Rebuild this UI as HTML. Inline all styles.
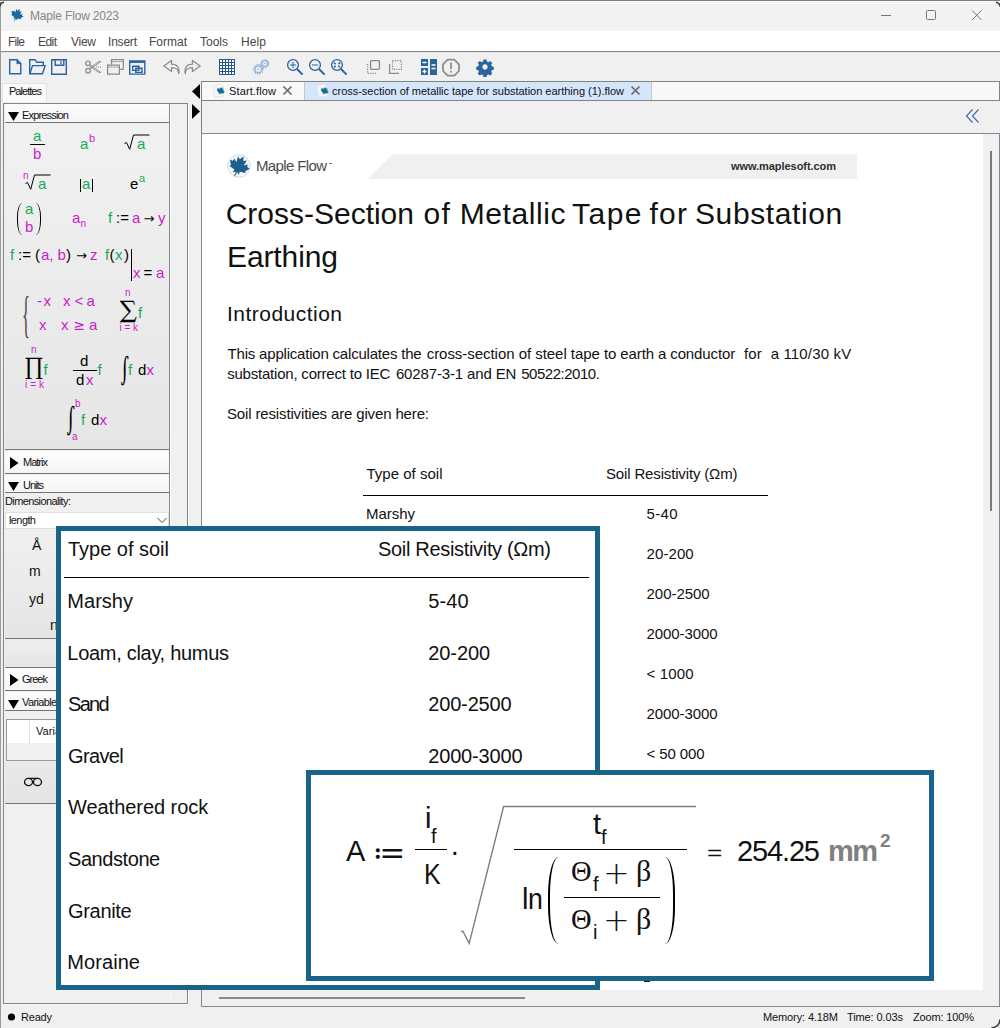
<!DOCTYPE html>
<html lang="en"><head><meta charset="utf-8"><title>Maple Flow 2023</title>
<style>
html,body{margin:0;padding:0}
body{width:1000px;height:1028px;overflow:hidden;background:#f0f0f0;position:relative;font-family:"Liberation Sans",sans-serif}
.b{position:absolute;box-sizing:border-box;display:block}
.t{position:absolute;white-space:pre;line-height:1;margin:0;padding:0}
.L{position:absolute;left:0;top:0;width:1000px;height:1028px;overflow:hidden}
svg{overflow:visible}
svg text{white-space:pre}
</style></head>
<body>
<div class="L" id="app">
<div class="b " style="left:0px;top:0px;width:1000px;height:1px;background:#7d7d7d;"></div>
<div class="b " style="left:0px;top:1px;width:1000px;height:1px;background:#fafafa;"></div>
<div class="b " style="left:0px;top:2px;width:1000px;height:29px;background:#f3f3f3;"></div>
<div class="b " style="left:0px;top:31px;width:1000px;height:20px;background:#ffffff;"></div>
<div class="b " style="left:0px;top:51px;width:1000px;height:1px;background:#8c8c8c;"></div>
<div class="b " style="left:0px;top:52px;width:1000px;height:1px;background:#e2e2e2;"></div>
<div class="b " style="left:0px;top:2px;width:1px;height:1026px;background:#9c9c9c;"></div>
<svg class="b" style="left:10px;top:8px;" width="14" height="14" viewBox="0 0 24 24"><g transform="rotate(24 12 12)"><path d="M12 0.5 L14 5 L17.2 3.2 L16.2 9.2 L19.6 6.6 L20.3 9.3 L23.5 9.8 L20.2 14.2 L21.3 15.8 L15 17 L15.6 20.2 L12.6 18.6 L12.5 23.5 L11.5 23.5 L11.4 18.6 L8.4 20.2 L9 17 L2.7 15.8 L3.8 14.2 L0.5 9.8 L3.7 9.3 L4.4 6.6 L7.8 9.2 L6.8 3.2 L10 5 Z" fill="#1a6a9c"/></g></svg>
<svg class="b" style="left:870px;top:5px;" width="120" height="20" viewBox="0 0 120 20"><g stroke="#777" stroke-width="1" fill="none"><path d="M11 10.5h10"/><rect x="56.5" y="5.5" width="9" height="9" rx="1"/><path d="M102 5.5l9.5 9.5M111.5 5.5l-9.5 9.5"/></g></svg>
<svg class="b" style="left:0px;top:0px;" width="1000" height="82" viewBox="0 0 1000 82">
<g fill="none" stroke="#2b62a0" stroke-width="1.4" stroke-linejoin="miter">
 <path d="M9.7 59.7h7.3l3.8 3.8v10.3h-11.1z"/><path d="M16.8 59.7v4h4z" fill="#2b62a0" stroke-width="0.6"/>
 <path d="M29.7 73.8v-14.1h5.3l1.8 2.6h6.5v3.2"/><path d="M29.9 73.8l2.6-8.2h12.6l-2.6 8.2z"/>
 <path d="M51.7 59.7h14.6v14.6h-14.6z"/><path d="M55.2 59.7v5.6h8.6v-5.6"/><path d="M61 61v3.2" stroke-width="1.2"/>
 <path d="M129.7 60.9h15.1v13.2h-15.1z"/><path d="M129.7 62h15.1" stroke-width="1.9"/>
 <path d="M132.7 66.2h6.2v4.2h-6.2z"/><path d="M135.8 68.2h6.2v4.2h-6.2z"/>
</g>
<g fill="none" stroke="#8a8a8a" stroke-width="1.2">
 <circle cx="88" cy="63.3" r="2.3"/><circle cx="88" cy="70.7" r="2.3"/>
 <path d="M89.8 64.6L101 72.6l-2.6-.4L89.6 66M89.8 69.4L101 61.4l-2.6.4L89.6 68" stroke-width=".9"/><path d="M96 67h5" stroke-dasharray="1 1"/>
 <path d="M111.5 64.5v-4.8h11.8v9.6h-3.2"/><path d="M111.5 61.6h11.8" stroke-width="1" stroke-dasharray="2.2 .8"/>
 <path d="M107.6 65.2h11.8v9h-11.8z"/><path d="M107.6 67.1h11.8" stroke-width="1" stroke-dasharray="2.2 .8"/>
 <path d="M178.8 73.6c-0.2-4.2-2.8-6-7.2-6v4l-7.8-5.6 7.8-5.6v3.8c5.6 0 8.2 3.6 7.2 9.4z" stroke-linejoin="round"/>
 <path d="M185.2 73.6c0.2-4.2 2.8-6 7.2-6v4l7.8-5.6-7.8-5.6v3.8c-5.6 0-8.2 3.6-7.2 9.4z" stroke-linejoin="round"/>
</g>
<rect x="219" y="59" width="16" height="16" fill="#1c5a8e"/>
<g fill="#fff"><rect x="220" y="60" width="2" height="2"/><rect x="220" y="63" width="2" height="2"/><rect x="220" y="66" width="2" height="2"/><rect x="220" y="69" width="2" height="2"/><rect x="220" y="72" width="2" height="2"/><rect x="223" y="60" width="2" height="2"/><rect x="223" y="63" width="2" height="2"/><rect x="223" y="66" width="2" height="2"/><rect x="223" y="69" width="2" height="2"/><rect x="223" y="72" width="2" height="2"/><rect x="226" y="60" width="2" height="2"/><rect x="226" y="63" width="2" height="2"/><rect x="226" y="66" width="2" height="2"/><rect x="226" y="69" width="2" height="2"/><rect x="226" y="72" width="2" height="2"/><rect x="229" y="60" width="2" height="2"/><rect x="229" y="63" width="2" height="2"/><rect x="229" y="66" width="2" height="2"/><rect x="229" y="69" width="2" height="2"/><rect x="229" y="72" width="2" height="2"/><rect x="232" y="60" width="2" height="2"/><rect x="232" y="63" width="2" height="2"/><rect x="232" y="66" width="2" height="2"/><rect x="232" y="69" width="2" height="2"/><rect x="232" y="72" width="2" height="2"/></g>
<g fill="none" stroke="#6c9bd2" stroke-width="1.1">
 <circle cx="258.3" cy="69.3" r="3.4" stroke-width=".9"/><circle cx="258.3" cy="69.3" r="4.6" stroke-dasharray="1.1 1.3" stroke-width="1.3"/>
 <circle cx="264.8" cy="63.6" r="2.8" stroke-width=".9"/><circle cx="264.8" cy="63.6" r="3.9" stroke-dasharray="1 1.2" stroke-width="1.2"/>
 <path d="M257.5 69.3h1.6M264.2 63.6h1.3" stroke-width=".9"/>
</g>
<g fill="none" stroke="#2b62a0" stroke-width="1.3">
 <circle cx="293" cy="65" r="5.4"/><path d="M290 65h6M293 62v6" stroke-width="1"/><path d="M297 69l5.6 5.6" stroke-width="2"/>
 <circle cx="315" cy="65" r="5.4"/><path d="M312 65h6" stroke-width="1"/><path d="M319 69l5.6 5.6" stroke-width="2"/>
 <circle cx="337" cy="65" r="5.4"/><path d="M334 62.6l1.6 1.6M340 62.6l-1.6 1.6M334 67.4l1.6-1.6M340 67.4l-1.6-1.6" stroke-width="1.5"/><path d="M341 69l5.6 5.6" stroke-width="2"/>
</g>
<g fill="none" stroke="#8a8a8a" stroke-width="1.3">
 <rect x="370.6" y="60.6" width="8.8" height="8.8" rx="0.8"/><path d="M367.6 64v9.4h9.4" stroke-dasharray="1.2 1.2"/>
 <rect x="392.6" y="60.6" width="8.8" height="8.8" stroke-dasharray="1.2 1.2"/><path d="M389.6 64v9.4h9.4"/>
 <path d="M447.7 59.7h6.6l4.7 4.7v6.6l-4.7 4.7h-6.6l-4.7-4.7v-6.6z" stroke-width="1.7"/>
 <path d="M451 62.5v6.5M451 70.8v1.8" stroke-width="1.7"/>
</g>
<g fill="#2b62a0">
 <rect x="421" y="59" width="7" height="7"/><rect x="421" y="68" width="7" height="7"/><rect x="430" y="59" width="7" height="16"/>
</g>
<g stroke="#fff" stroke-width="1.3" fill="none"><path d="M422.5 62.5h4M422.5 71.5h4M424.5 69.5v4M431.5 65h4M431.5 68.5h4"/></g>
<g transform="translate(485 67) scale(.93)">
 <path fill="#2b62a0" fill-rule="evenodd" d="M-1.6 -8h3.2l0.5 2.1 1.6 0.7 1.9-1.2 2.2 2.2-1.2 1.9 0.7 1.6 2.1 0.5v3.2l-2.1 0.5-0.7 1.6 1.2 1.9-2.2 2.2-1.9-1.2-1.6 0.7-0.5 2.1h-3.2l-0.5-2.1-1.6-0.7-1.9 1.2-2.2-2.2 1.2-1.9-0.7-1.6-2.1-0.5v-3.2l2.1-0.5 0.7-1.6-1.2-1.9 2.2-2.2 1.9 1.2 1.6-0.7z M0 -2.9a2.9 2.9 0 1 0 0.01 0z"/>
</g>
</svg>
<div class="b " style="left:2px;top:83px;width:45px;height:19px;background:#fafafa;border:1px solid #e2e2e2;border-bottom:none;"></div>
<div class="b " style="left:3px;top:103px;width:185px;height:901px;background:#f0f0f0;border:1px solid #7f8590;"></div>
<div class="b " style="left:169px;top:104px;width:1px;height:700px;background:#858b95;"></div>
<div class="b " style="left:170px;top:104px;width:1px;height:899px;background:#fbfbfb;"></div>
<div class="b " style="left:188px;top:103px;width:1px;height:902px;background:#fafafa;"></div>
<div class="b " style="left:3px;top:1004px;width:186px;height:1px;background:#fafafa;"></div>
<svg class="b" style="left:190px;top:82px;" width="12" height="40" viewBox="0 0 12 40"><path d="M10 2v15l-8-7.5z" fill="#000"/><path d="M2 22v15l8-7.5z" fill="#000"/></svg>
<div class="b " style="left:5px;top:104px;width:164px;height:18px;background:linear-gradient(#fcfcfc,#f5f5f5);"></div>
<div class="b " style="left:5px;top:122px;width:164px;height:1px;background:#747474;"></div>
<svg class="b" style="left:8px;top:112px;" width="11" height="9" viewBox="0 0 11 9"><path d="M0 0h11l-5.5 9z" fill="#000"/></svg>
<div class="b " style="left:5px;top:123px;width:164px;height:326px;background:linear-gradient(#f1f1f1,#e6e6e6);"></div>
<div class="b " style="left:5px;top:449px;width:164px;height:1px;background:#747474;"></div>
<div class="b " style="left:5px;top:451px;width:164px;height:22px;background:linear-gradient(#fcfcfc,#f5f5f5);"></div>
<div class="b " style="left:5px;top:473px;width:164px;height:1px;background:#747474;"></div>
<svg class="b" style="left:10px;top:457px;" width="9" height="12" viewBox="0 0 9 12"><path d="M0 0v12l8.5-6z" fill="#000"/></svg>
<div class="b " style="left:5px;top:475px;width:164px;height:17px;background:linear-gradient(#fcfcfc,#f5f5f5);"></div>
<div class="b " style="left:5px;top:492px;width:164px;height:1px;background:#747474;"></div>
<svg class="b" style="left:8px;top:482px;" width="11" height="9" viewBox="0 0 11 9"><path d="M0 0h11l-5.5 9z" fill="#000"/></svg>
<div class="b " style="left:5px;top:512px;width:164px;height:17px;background:#ffffff;border:1px solid #e0e0e0;"></div>
<svg class="b" style="left:156px;top:516px;" width="12" height="9" viewBox="0 0 12 9"><path d="M1.5 2l4.5 4.5 4.5-4.5" fill="none" stroke="#444" stroke-width="1"/></svg>
<div class="b " style="left:5px;top:529px;width:164px;height:109px;background:linear-gradient(#f0f0f0,#e5e5e5);"></div>
<div class="b " style="left:5px;top:638px;width:164px;height:1px;background:#747474;"></div>
<div class="b " style="left:5px;top:639px;width:164px;height:28px;background:linear-gradient(#eeeeee,#e6e6e6);"></div>
<div class="b " style="left:5px;top:667px;width:164px;height:1px;background:#747474;"></div>
<div class="b " style="left:5px;top:668px;width:164px;height:22px;background:linear-gradient(#fcfcfc,#f5f5f5);"></div>
<div class="b " style="left:5px;top:690px;width:164px;height:1px;background:#747474;"></div>
<svg class="b" style="left:10px;top:674px;" width="9" height="12" viewBox="0 0 9 12"><path d="M0 0v12l8.5-6z" fill="#000"/></svg>
<div class="b " style="left:5px;top:692px;width:164px;height:18px;background:linear-gradient(#fcfcfc,#f5f5f5);"></div>
<div class="b " style="left:5px;top:710px;width:164px;height:1px;background:#747474;"></div>
<svg class="b" style="left:8px;top:700px;" width="11" height="9" viewBox="0 0 11 9"><path d="M0 0h11l-5.5 9z" fill="#000"/></svg>
<div class="b " style="left:5px;top:711px;width:164px;height:92px;background:linear-gradient(#f0f0f0,#e4e4e4);"></div>
<div class="b " style="left:5px;top:803px;width:164px;height:1px;background:#747474;"></div>
<div class="b " style="left:6px;top:719px;width:160px;height:42px;background:#f0f0f0;border:1px solid #9a9a9a;"></div>
<div class="b " style="left:7px;top:720px;width:158px;height:23px;background:#ffffff;"></div>
<div class="b " style="left:29px;top:720px;width:1px;height:23px;background:#e0e0e0;"></div>
<svg class="b" style="left:23px;top:775px;" width="20" height="12" viewBox="0 0 20 12"><g fill="none" stroke="#111" stroke-width="1.3"><ellipse cx="5.5" cy="7" rx="4" ry="3.6"/><ellipse cx="14.5" cy="7" rx="4" ry="3.6"/><path d="M5.5 3.4h9"/></g></svg>
<div class="b " style="left:201px;top:81px;width:799px;height:20px;background:#f8f8f8;border:1px solid #828282;"></div>
<div class="b " style="left:305px;top:82px;width:346px;height:18px;background:#d5e5fa;"></div>
<div class="b " style="left:304px;top:82px;width:1px;height:18px;background:#c8c8c8;"></div>
<div class="b " style="left:651px;top:82px;width:1px;height:18px;background:#c8c8c8;"></div>
<svg class="b" style="left:212px;top:84px;" width="14" height="14" viewBox="0 0 14 14"><path d="M0.5 2.2l7.5-2 3.6 2.6-.4 9.2-8.2 1.2z" fill="#fbfbfb" stroke="#dedede" stroke-width=".8"/><path d="M1.5 4l5-1.2M1.8 6l3-.6" stroke="#e3dfe8" stroke-width=".7" fill="none"/><g transform="translate(4 2.4) scale(.38) rotate(24 12 12)"><path d="M12 0.5 L14 5 L17.2 3.2 L16.2 9.2 L19.6 6.6 L20.3 9.3 L23.5 9.8 L20.2 14.2 L21.3 15.8 L15 17 L15.6 20.2 L12.6 18.6 L12.5 23.5 L11.5 23.5 L11.4 18.6 L8.4 20.2 L9 17 L2.7 15.8 L3.8 14.2 L0.5 9.8 L3.7 9.3 L4.4 6.6 L7.8 9.2 L6.8 3.2 L10 5 Z" fill="#16699b"/></g></svg>
<svg class="b" style="left:282px;top:85px;" width="12" height="12" viewBox="0 0 12 12"><path d="M1.5 1.5l8 8M9.5 1.5l-8 8" stroke="#6a6a6a" stroke-width="1.7" fill="none"/></svg>
<svg class="b" style="left:316px;top:84px;" width="14" height="14" viewBox="0 0 14 14"><path d="M0.5 2.2l7.5-2 3.6 2.6-.4 9.2-8.2 1.2z" fill="#fbfbfb" stroke="#dedede" stroke-width=".8"/><path d="M1.5 4l5-1.2M1.8 6l3-.6" stroke="#e3dfe8" stroke-width=".7" fill="none"/><g transform="translate(4 2.4) scale(.38) rotate(24 12 12)"><path d="M12 0.5 L14 5 L17.2 3.2 L16.2 9.2 L19.6 6.6 L20.3 9.3 L23.5 9.8 L20.2 14.2 L21.3 15.8 L15 17 L15.6 20.2 L12.6 18.6 L12.5 23.5 L11.5 23.5 L11.4 18.6 L8.4 20.2 L9 17 L2.7 15.8 L3.8 14.2 L0.5 9.8 L3.7 9.3 L4.4 6.6 L7.8 9.2 L6.8 3.2 L10 5 Z" fill="#16699b"/></g></svg>
<svg class="b" style="left:630px;top:85px;" width="12" height="12" viewBox="0 0 12 12"><path d="M1.5 1.5l8 8M9.5 1.5l-8 8" stroke="#6a6a6a" stroke-width="1.7" fill="none"/></svg>
<div class="b " style="left:201px;top:100px;width:1px;height:34px;background:#828282;"></div>
<svg class="b" style="left:964px;top:107px;" width="18" height="18" viewBox="0 0 18 18"><path d="M8.5 2.5l-6 6.5 6 6.5M14.5 2.5l-6 6.5 6 6.5" fill="none" stroke="#3c6fb0" stroke-width="1.2"/></svg>
<div class="b " style="left:201px;top:133px;width:799px;height:874px;background:#ffffff;border:1px solid #828790;"></div>
<div class="b " style="left:983px;top:134px;width:16px;height:856px;background:#f0f0f0;"></div>
<div class="b " style="left:202px;top:990px;width:797px;height:16px;background:#f0f0f0;"></div>
<div class="b " style="left:990px;top:151px;width:2px;height:360px;background:#7c7c7c;"></div>
<div class="b " style="left:219px;top:997px;width:306px;height:2px;background:#8a8a8a;"></div>
<svg class="b" style="left:6px;top:1011px;" width="12" height="12" viewBox="0 0 12 12"><circle cx="5.5" cy="6" r="3.6" fill="#000"/></svg>
<svg class="b" style="left:226px;top:153px;" width="26" height="26" viewBox="0 0 26 26"><circle cx="13" cy="13" r="11.3" fill="#f4f6f8" stroke="#c9d3dc" stroke-width=".8"/><g transform="translate(1.6 1.8) scale(.95) rotate(24 12 12)"><path d="M12 0.5 L14 5 L17.2 3.2 L16.2 9.2 L19.6 6.6 L20.3 9.3 L23.5 9.8 L20.2 14.2 L21.3 15.8 L15 17 L15.6 20.2 L12.6 18.6 L12.5 23.5 L11.5 23.5 L11.4 18.6 L8.4 20.2 L9 17 L2.7 15.8 L3.8 14.2 L0.5 9.8 L3.7 9.3 L4.4 6.6 L7.8 9.2 L6.8 3.2 L10 5 Z" fill="#1f5f8d"/></g></svg>
<div class="b " style="left:329px;top:163px;width:3px;height:1px;background:#777;"></div>
<svg class="b" style="left:360px;top:154px;" width="500" height="25" viewBox="0 0 500 25"><path d="M33 0h464v25h-490z" fill="#f0f0f0"/></svg>
<div class="b " style="left:363px;top:495px;width:405px;height:1px;background:#000;"></div>
<div class="b " style="left:644px;top:981px;width:6px;height:1px;background:#111;"></div>
<div class="b " style="left:30px;top:144px;width:15px;height:1px;background:#000;"></div>
<svg class="b" style="left:120px;top:130px;" width="34" height="24" viewBox="0 0 34 24"><path d="M4.5 13.5l2-1 3.2 6.8 3.8-14.3h16" fill="none" stroke="#000" stroke-width="1"/></svg>
<svg class="b" style="left:22px;top:170px;" width="34" height="24" viewBox="0 0 34 24"><path d="M3.5 13.5l2-1 3.2 6.8 3.8-14.3h16" fill="none" stroke="#000" stroke-width="1"/></svg>
<div class="b " style="left:80px;top:179px;width:1px;height:13px;background:#000;"></div>
<div class="b " style="left:92px;top:179px;width:1px;height:13px;background:#000;"></div>
<div class="b " style="left:17px;top:203px;width:5.5px;height:32px;border-left:1.2px solid #000;border-radius:5.5px 0 0 5.5px/14.08px 0 0 14.08px;"></div>
<div class="b " style="left:35px;top:203px;width:5.5px;height:32px;border-right:1.2px solid #000;border-radius:0 5.5px 5.5px 0/0 14.08px 14.08px 0;"></div>
<div class="b " style="left:131px;top:249px;width:1px;height:32px;background:#000;"></div>
<div class="b " style="left:73px;top:370px;width:24px;height:1px;background:#000;"></div>
<span class="t" style="left:30px;top:10.00px;font-size:12px;color:#878787;letter-spacing:-0.171px;">Maple Flow 2023</span>
<span class="t" style="left:8px;top:36.00px;font-size:12px;color:#4a4545;letter-spacing:-0.781px;">File</span>
<span class="t" style="left:38px;top:36.00px;font-size:12px;color:#4a4545;letter-spacing:-0.562px;">Edit</span>
<span class="t" style="left:71px;top:36.00px;font-size:12px;color:#4a4545;letter-spacing:-0.266px;">View</span>
<span class="t" style="left:108px;top:36.00px;font-size:12px;color:#4a4545;letter-spacing:-0.203px;">Insert</span>
<span class="t" style="left:149px;top:36.00px;font-size:12px;color:#4a4545;letter-spacing:-0.003px;">Format</span>
<span class="t" style="left:200px;top:36.00px;font-size:12px;color:#4a4545;letter-spacing:-0.004px;">Tools</span>
<span class="t" style="left:241px;top:36.00px;font-size:12px;color:#4a4545;letter-spacing:0.104px;">Help</span>
<span class="t" style="left:9px;top:86.00px;font-size:11px;color:#111;letter-spacing:-0.964px;">Palettes</span>
<span class="t" style="left:22px;top:110.00px;font-size:11px;color:#101018;letter-spacing:-0.825px;">Expression</span>
<span class="t" style="left:23px;top:457.00px;font-size:11px;color:#101018;letter-spacing:-0.991px;">Matrix</span>
<span class="t" style="left:23px;top:480.00px;font-size:11px;color:#101018;letter-spacing:-1.016px;">Units</span>
<span class="t" style="left:5px;top:496.00px;font-size:11px;color:#101018;letter-spacing:-0.614px;">Dimensionality:</span>
<span class="t" style="left:9px;top:515.00px;font-size:11px;color:#101018;letter-spacing:-0.597px;">length</span>
<span class="t" style="left:32px;top:538.00px;font-size:14px;color:#111;">Å</span>
<span class="t" style="left:29px;top:564.00px;font-size:14px;color:#111;">m</span>
<span class="t" style="left:29px;top:592.00px;font-size:14px;color:#111;">yd</span>
<span class="t" style="left:50px;top:618.00px;font-size:14px;color:#111;">n</span>
<span class="t" style="left:22px;top:674.00px;font-size:11px;color:#101018;letter-spacing:-0.992px;">Greek</span>
<span class="t" style="left:22px;top:697.00px;font-size:11px;color:#101018;letter-spacing:-0.631px;">Variables</span>
<span class="t" style="left:36px;top:726.00px;font-size:11px;color:#111;letter-spacing:0.065px;">Variable</span>
<span class="t" style="left:229px;top:86.00px;font-size:11px;color:#101018;letter-spacing:0.127px;">Start.flow</span>
<span class="t" style="left:332px;top:86.00px;font-size:11px;color:#101018;letter-spacing:-0.014px;">cross-section of metallic tape for substation earthing (1).flow</span>
<span class="t" style="left:21px;top:1012.00px;font-size:11px;color:#111;letter-spacing:-0.199px;">Ready</span>
<span class="t" style="left:763px;top:1012.00px;font-size:11px;color:#111;letter-spacing:-0.118px;">Memory: 4.18M</span>
<span class="t" style="left:847px;top:1012.00px;font-size:11px;color:#111;letter-spacing:-0.106px;">Time: 0.03s</span>
<span class="t" style="left:913px;top:1012.00px;font-size:11px;color:#111;letter-spacing:-0.153px;">Zoom: 100%</span>
<span class="t" style="left:256px;top:158.00px;font-size:15px;color:#4c4c4c;letter-spacing:-0.634px;">Maple Flow</span>
<span class="t" style="left:731px;top:161.00px;font-size:11px;color:#2e2e2e;font-weight:700;letter-spacing:-0.060px;">www.maplesoft.com</span>
<span class="t" style="left:225.7px;top:199.00px;font-size:30px;color:#111;letter-spacing:-0.009px;">Cross-Section</span>
<span class="t" style="left:423.5px;top:199.00px;font-size:30px;color:#111;letter-spacing:1.2px;">of</span>
<span class="t" style="left:459.7px;top:199.00px;font-size:30px;color:#111;letter-spacing:0.585px;">Metallic</span>
<span class="t" style="left:572px;top:199.00px;font-size:30px;color:#111;letter-spacing:1.479px;">Tape</span>
<span class="t" style="left:649.5px;top:199.00px;font-size:30px;color:#111;letter-spacing:1.2px;">for</span>
<span class="t" style="left:695px;top:199.00px;font-size:30px;color:#111;letter-spacing:0.602px;">Substation</span>
<span class="t" style="left:227px;top:242.00px;font-size:30px;color:#111;letter-spacing:-0.107px;">Earthing</span>
<span class="t" style="left:227px;top:303.00px;font-size:21px;color:#111;letter-spacing:0.477px;">Introduction</span>
<span class="t" style="left:227.6px;top:346.00px;font-size:15px;color:#111;letter-spacing:-0.201px;">This application calculates the</span>
<span class="t" style="left:426.7px;top:346.00px;font-size:15px;color:#111;letter-spacing:-0.041px;">cross-section of steel tape</span>
<span class="t" style="left:604.0px;top:346.00px;font-size:15px;color:#111;letter-spacing:-0.117px;">to earth a conductor</span>
<span class="t" style="left:744.0px;top:346.00px;font-size:15px;color:#111;letter-spacing:0.160px;">for  a 110/30 kV</span>
<span class="t" style="left:227.2px;top:366.00px;font-size:15px;color:#111;letter-spacing:-0.212px;">substation, correct to IEC</span>
<span class="t" style="left:395.9px;top:366.00px;font-size:15px;color:#111;letter-spacing:-0.140px;">60287-3-1 and EN</span>
<span class="t" style="left:521.2px;top:366.00px;font-size:15px;color:#111;letter-spacing:-0.472px;">50522:2010.</span>
<span class="t" style="left:227px;top:406.00px;font-size:15px;color:#111;letter-spacing:-0.144px;">Soil resistivities are given here:</span>
<span class="t" style="left:366.5px;top:466.00px;font-size:15px;color:#111;letter-spacing:0.011px;">Type of soil</span>
<span class="t" style="left:606px;top:466.00px;font-size:15px;color:#111;letter-spacing:-0.153px;">Soil Resistivity (Ωm)</span>
<span class="t" style="left:366px;top:506.00px;font-size:15px;color:#111;letter-spacing:-0.037px;">Marshy</span>
<span class="t" style="left:646.5px;top:506.00px;font-size:15px;color:#111;letter-spacing:0.390px;">5-40</span>
<span class="t" style="left:646.5px;top:546.00px;font-size:15px;color:#111;letter-spacing:0.096px;">20-200</span>
<span class="t" style="left:646.5px;top:586.00px;font-size:15px;color:#111;letter-spacing:-0.029px;">200-2500</span>
<span class="t" style="left:646.5px;top:626.00px;font-size:15px;color:#111;letter-spacing:-0.067px;">2000-3000</span>
<span class="t" style="left:646.5px;top:666.00px;font-size:15px;color:#111;letter-spacing:0.181px;">&lt; 1000</span>
<span class="t" style="left:646.5px;top:706.00px;font-size:15px;color:#111;letter-spacing:-0.067px;">2000-3000</span>
<span class="t" style="left:646.5px;top:746.00px;font-size:15px;color:#111;letter-spacing:-0.087px;">&lt; 50 000</span>
<span class="t" style="left:33px;top:128.00px;font-size:15px;color:#1aa85a;">a</span>
<span class="t" style="left:33px;top:146.00px;font-size:15px;color:#c81ec8;">b</span>
<span class="t" style="left:80px;top:136.00px;font-size:15px;color:#1aa85a;">a</span>
<span class="t" style="left:89px;top:133.00px;font-size:11px;color:#c81ec8;">b</span>
<span class="t" style="left:137px;top:136.00px;font-size:15px;color:#1aa85a;">a</span>
<span class="t" style="left:23px;top:171.00px;font-size:10px;color:#c81ec8;">n</span>
<span class="t" style="left:38px;top:176.00px;font-size:15px;color:#1aa85a;">a</span>
<span class="t" style="left:82px;top:176.00px;font-size:15px;color:#1aa85a;">a</span>
<span class="t" style="left:130px;top:176.00px;font-size:15px;color:#000;">e</span>
<span class="t" style="left:139px;top:173.00px;font-size:11px;color:#1aa85a;">a</span>
<span class="t" style="left:25px;top:200.50px;font-size:15px;color:#1aa85a;">a</span>
<span class="t" style="left:25px;top:218.50px;font-size:15px;color:#c81ec8;">b</span>
<span class="t" style="left:72px;top:210.00px;font-size:15px;color:#c81ec8;">a</span>
<span class="t" style="left:80.5px;top:218.50px;font-size:10px;color:#c81ec8;">n</span>
<span class="t" style="left:108px;top:210.00px;font-size:15px;color:#1aa85a;">f</span>
<span class="t" style="left:116px;top:210.00px;font-size:15px;color:#000;">:=</span>
<span class="t" style="left:132px;top:210.00px;font-size:15px;color:#c81ec8;">a</span>
<span class="t" style="left:143.5px;top:212.00px;font-size:13px;color:#000;font-family:'DejaVu Sans', 'Liberation Sans', sans-serif;">→</span>
<span class="t" style="left:158px;top:210.00px;font-size:15px;color:#c81ec8;">y</span>
<span class="t" style="left:10px;top:246.50px;font-size:15px;color:#1aa85a;">f</span>
<span class="t" style="left:18px;top:246.50px;font-size:15px;color:#000;">:=</span>
<span class="t" style="left:35px;top:246.50px;font-size:15px;color:#000;">(</span>
<span class="t" style="left:41px;top:246.50px;font-size:15px;color:#c81ec8;">a,</span>
<span class="t" style="left:57.5px;top:246.50px;font-size:15px;color:#c81ec8;">b</span>
<span class="t" style="left:66px;top:246.50px;font-size:15px;color:#000;">)</span>
<span class="t" style="left:76px;top:248.50px;font-size:13px;color:#000;font-family:'DejaVu Sans', 'Liberation Sans', sans-serif;">→</span>
<span class="t" style="left:90px;top:246.50px;font-size:15px;color:#c81ec8;">z</span>
<span class="t" style="left:105px;top:246.50px;font-size:15px;color:#1aa85a;">f</span>
<span class="t" style="left:109.5px;top:246.50px;font-size:15px;color:#000;">(</span>
<span class="t" style="left:115px;top:246.50px;font-size:15px;color:#1aa85a;">x</span>
<span class="t" style="left:124px;top:246.50px;font-size:15px;color:#000;">)</span>
<span class="t" style="left:133px;top:264.50px;font-size:15px;color:#c81ec8;">x</span>
<span class="t" style="left:143.5px;top:264.50px;font-size:15px;color:#000;">=</span>
<span class="t" style="left:156px;top:264.50px;font-size:15px;color:#c81ec8;">a</span>
<span class="t" style="left:21.5px;top:289.00px;font-size:50px;color:#444;font-family:'Liberation Serif', serif;transform:scaleX(.33);transform-origin:0 50%;">{</span>
<span class="t" style="left:37px;top:292.50px;font-size:15px;color:#c81ec8;letter-spacing:1.500px;">-x</span>
<span class="t" style="left:63px;top:292.50px;font-size:15px;color:#c81ec8;">x</span>
<span class="t" style="left:74.5px;top:292.50px;font-size:15px;color:#c81ec8;">&lt;</span>
<span class="t" style="left:86.5px;top:292.50px;font-size:15px;color:#c81ec8;">a</span>
<span class="t" style="left:39px;top:316.50px;font-size:15px;color:#c81ec8;">x</span>
<span class="t" style="left:61px;top:316.50px;font-size:15px;color:#c81ec8;">x</span>
<span class="t" style="left:73.5px;top:317.50px;font-size:14px;color:#c81ec8;font-family:'DejaVu Sans', 'Liberation Sans', sans-serif;">≥</span>
<span class="t" style="left:89px;top:316.50px;font-size:15px;color:#c81ec8;">a</span>
<span class="t" style="left:125px;top:288.00px;font-size:10px;color:#c81ec8;">n</span>
<span class="t" style="left:118.3px;top:300.50px;font-size:20.5px;color:#000;font-family:'DejaVu Math TeX Gyre', 'DejaVu Serif', serif;">∑</span>
<span class="t" style="left:138px;top:304.50px;font-size:15px;color:#1aa85a;">f</span>
<span class="t" style="left:119.5px;top:322.50px;font-size:10px;color:#c81ec8;letter-spacing:-0.031px;">i = k</span>
<span class="t" style="left:31px;top:344.50px;font-size:10px;color:#c81ec8;">n</span>
<span class="t" style="left:24.4px;top:357.50px;font-size:20.5px;color:#000;font-family:'DejaVu Math TeX Gyre', 'DejaVu Serif', serif;transform:scaleX(.92);transform-origin:0 50%;">∏</span>
<span class="t" style="left:43.5px;top:361.50px;font-size:15px;color:#1aa85a;">f</span>
<span class="t" style="left:25px;top:379.50px;font-size:10px;color:#c81ec8;letter-spacing:0.094px;">i = k</span>
<span class="t" style="left:80px;top:352.50px;font-size:15px;color:#000;">d</span>
<span class="t" style="left:76px;top:371.50px;font-size:15px;color:#000;">d</span>
<span class="t" style="left:86px;top:371.50px;font-size:15px;color:#c81ec8;">x</span>
<span class="t" style="left:97.5px;top:361.50px;font-size:15px;color:#1aa85a;">f</span>
<span class="t" style="left:119.8px;top:357.40px;font-size:27px;color:#000;font-family:'DejaVu Math TeX Gyre', 'DejaVu Serif', serif;transform:scaleX(.6);transform-origin:0 50%;">∫</span>
<span class="t" style="left:128px;top:361.50px;font-size:15px;color:#1aa85a;">f</span>
<span class="t" style="left:138px;top:361.50px;font-size:15px;color:#000;">d</span>
<span class="t" style="left:146.5px;top:361.50px;font-size:15px;color:#c81ec8;">x</span>
<span class="t" style="left:75px;top:398.50px;font-size:10px;color:#c81ec8;">b</span>
<span class="t" style="left:65.8px;top:407.40px;font-size:27px;color:#000;font-family:'DejaVu Math TeX Gyre', 'DejaVu Serif', serif;transform:scaleX(.6);transform-origin:0 50%;">∫</span>
<span class="t" style="left:72px;top:431.50px;font-size:10px;color:#c81ec8;">a</span>
<span class="t" style="left:81px;top:411.50px;font-size:15px;color:#1aa85a;">f</span>
<span class="t" style="left:91px;top:411.50px;font-size:15px;color:#000;">d</span>
<span class="t" style="left:99.5px;top:411.50px;font-size:15px;color:#c81ec8;">x</span>
</div>
<div class="L" id="inset-table">
<div class="b " style="left:56px;top:526px;width:544px;height:464px;background:#ffffff;border:5px solid #1b6489;"></div>
<div class="b " style="left:64px;top:577px;width:525px;height:1px;background:#000;"></div>
<span class="t" style="left:68px;top:539.00px;font-size:20px;color:#111;letter-spacing:-0.016px;">Type of soil</span>
<span class="t" style="left:378px;top:539.00px;font-size:20px;color:#111;letter-spacing:-0.320px;">Soil Resistivity (Ωm)</span>
<span class="t" style="left:67.3px;top:591.00px;font-size:20px;color:#111;letter-spacing:0.024px;">Marshy</span>
<span class="t" style="left:428.2px;top:591.00px;font-size:20px;color:#111;letter-spacing:0.156px;">5-40</span>
<span class="t" style="left:67.3px;top:642.70px;font-size:20px;color:#111;letter-spacing:-0.292px;">Loam, clay, humus</span>
<span class="t" style="left:428.2px;top:642.70px;font-size:20px;color:#111;letter-spacing:-0.056px;">20-200</span>
<span class="t" style="left:68px;top:694.00px;font-size:20px;color:#111;letter-spacing:-1.673px;">Sand</span>
<span class="t" style="left:428.2px;top:694.00px;font-size:20px;color:#111;letter-spacing:-0.147px;">200-2500</span>
<span class="t" style="left:68px;top:745.70px;font-size:20px;color:#111;letter-spacing:-0.641px;">Gravel</span>
<span class="t" style="left:428.2px;top:745.70px;font-size:20px;color:#111;letter-spacing:-0.145px;">2000-3000</span>
<span class="t" style="left:68px;top:796.80px;font-size:20px;color:#111;letter-spacing:-0.047px;">Weathered rock</span>
<span class="t" style="left:68px;top:848.80px;font-size:20px;color:#111;letter-spacing:-0.430px;">Sandstone</span>
<span class="t" style="left:68px;top:900.80px;font-size:20px;color:#111;letter-spacing:-0.316px;">Granite</span>
<span class="t" style="left:67.3px;top:952.00px;font-size:20px;color:#111;letter-spacing:0.072px;">Moraine</span>
</div>
<div class="L" id="inset-formula">
<div class="b " style="left:306px;top:770px;width:628px;height:211px;background:#ffffff;border:5px solid #1b6489;"></div>
<div class="b " style="left:415px;top:849px;width:32px;height:1px;background:#000;"></div>
<svg class="b" style="left:455px;top:800px;" width="245" height="150" viewBox="0 0 245 150"><path d="M6 131.8l1.8-.8 6.4 12.3 34.4-136.8h192.4" fill="none" stroke="#7c7c7c" stroke-width="1.35"/></svg>
<div class="b " style="left:514px;top:849px;width:173px;height:1px;background:#000;"></div>
<div class="b " style="left:548px;top:857px;width:10.5px;height:87px;border-left:2px solid #000;border-radius:10.5px 0 0 10.5px/38.28px 0 0 38.28px;"></div>
<div class="b " style="left:664.5px;top:857px;width:10.5px;height:87px;border-right:2px solid #000;border-radius:0 10.5px 10.5px 0/0 38.28px 38.28px 0;"></div>
<div class="b " style="left:564px;top:897px;width:96px;height:1px;background:#000;"></div>
<span class="t" style="left:346px;top:837.00px;font-size:29px;color:#111;">A</span>
<span class="t" style="left:373.5px;top:837.00px;font-size:31px;color:#111;font-family:'DejaVu Math TeX Gyre', 'DejaVu Serif', serif;">≔</span>
<span class="t" style="left:425px;top:804.00px;font-size:29px;color:#111;">i</span>
<span class="t" style="left:431px;top:825.50px;font-size:20px;color:#111;">f</span>
<span class="t" style="left:423.5px;top:859.50px;font-size:29px;color:#111;transform:scaleX(.86);transform-origin:0 50%;">K</span>
<span class="t" style="left:450px;top:837.00px;font-size:29px;color:#111;">·</span>
<span class="t" style="left:593px;top:810.00px;font-size:29px;color:#111;">t</span>
<span class="t" style="left:601px;top:826.50px;font-size:20px;color:#111;">f</span>
<span class="t" style="left:522px;top:885.00px;font-size:29px;color:#111;">l</span>
<span class="t" style="left:527.5px;top:885.00px;font-size:29px;color:#111;transform:scaleX(.92);transform-origin:0 50%;">n</span>
<span class="t" style="left:571px;top:858.00px;font-size:28.5px;color:#111;font-family:'Liberation Serif', serif;">Θ</span>
<span class="t" style="left:593px;top:874.00px;font-size:20px;color:#111;">f</span>
<span class="t" style="left:603px;top:856.50px;font-size:32px;color:#111;font-family:'DejaVu Sans Light', 'DejaVu Sans', sans-serif;">+</span>
<span class="t" style="left:636px;top:856.00px;font-size:30px;color:#111;font-family:'Liberation Serif', serif;">β</span>
<span class="t" style="left:571px;top:905.50px;font-size:28.5px;color:#111;font-family:'Liberation Serif', serif;">Θ</span>
<span class="t" style="left:593px;top:922.00px;font-size:20px;color:#111;">i</span>
<span class="t" style="left:603px;top:904.00px;font-size:32px;color:#111;font-family:'DejaVu Sans Light', 'DejaVu Sans', sans-serif;">+</span>
<span class="t" style="left:636px;top:903.50px;font-size:30px;color:#111;font-family:'Liberation Serif', serif;">β</span>
<span class="t" style="left:707px;top:842.00px;font-size:21px;color:#111;transform:scaleX(1.25);transform-origin:0 50%;">=</span>
<span class="t" style="left:737px;top:837.00px;font-size:29px;color:#111;letter-spacing:-1.141px;">254.25</span>
<span class="t" style="left:828px;top:837.00px;font-size:29px;color:#808080;font-weight:700;letter-spacing:-1.578px;">mm</span>
<span class="t" style="left:880px;top:830.50px;font-size:19px;color:#808080;font-weight:700;">2</span>
</div>
<div class="L" id="overlay">
<svg class="b" style="left:0px;top:0px;" width="1000" height="1028" viewBox="0 0 1000 1028"><g fill="none" stroke="#3a3a3a" stroke-width="1.6"><path d="M0 6.5q.3-4 4-4.2"/><path d="M996 2.3q3.6.3 4 4.2"/><path d="M1000 1019.5q-.6 7.5-8.5 8.5"/></g></svg>

</div>
</body></html>
